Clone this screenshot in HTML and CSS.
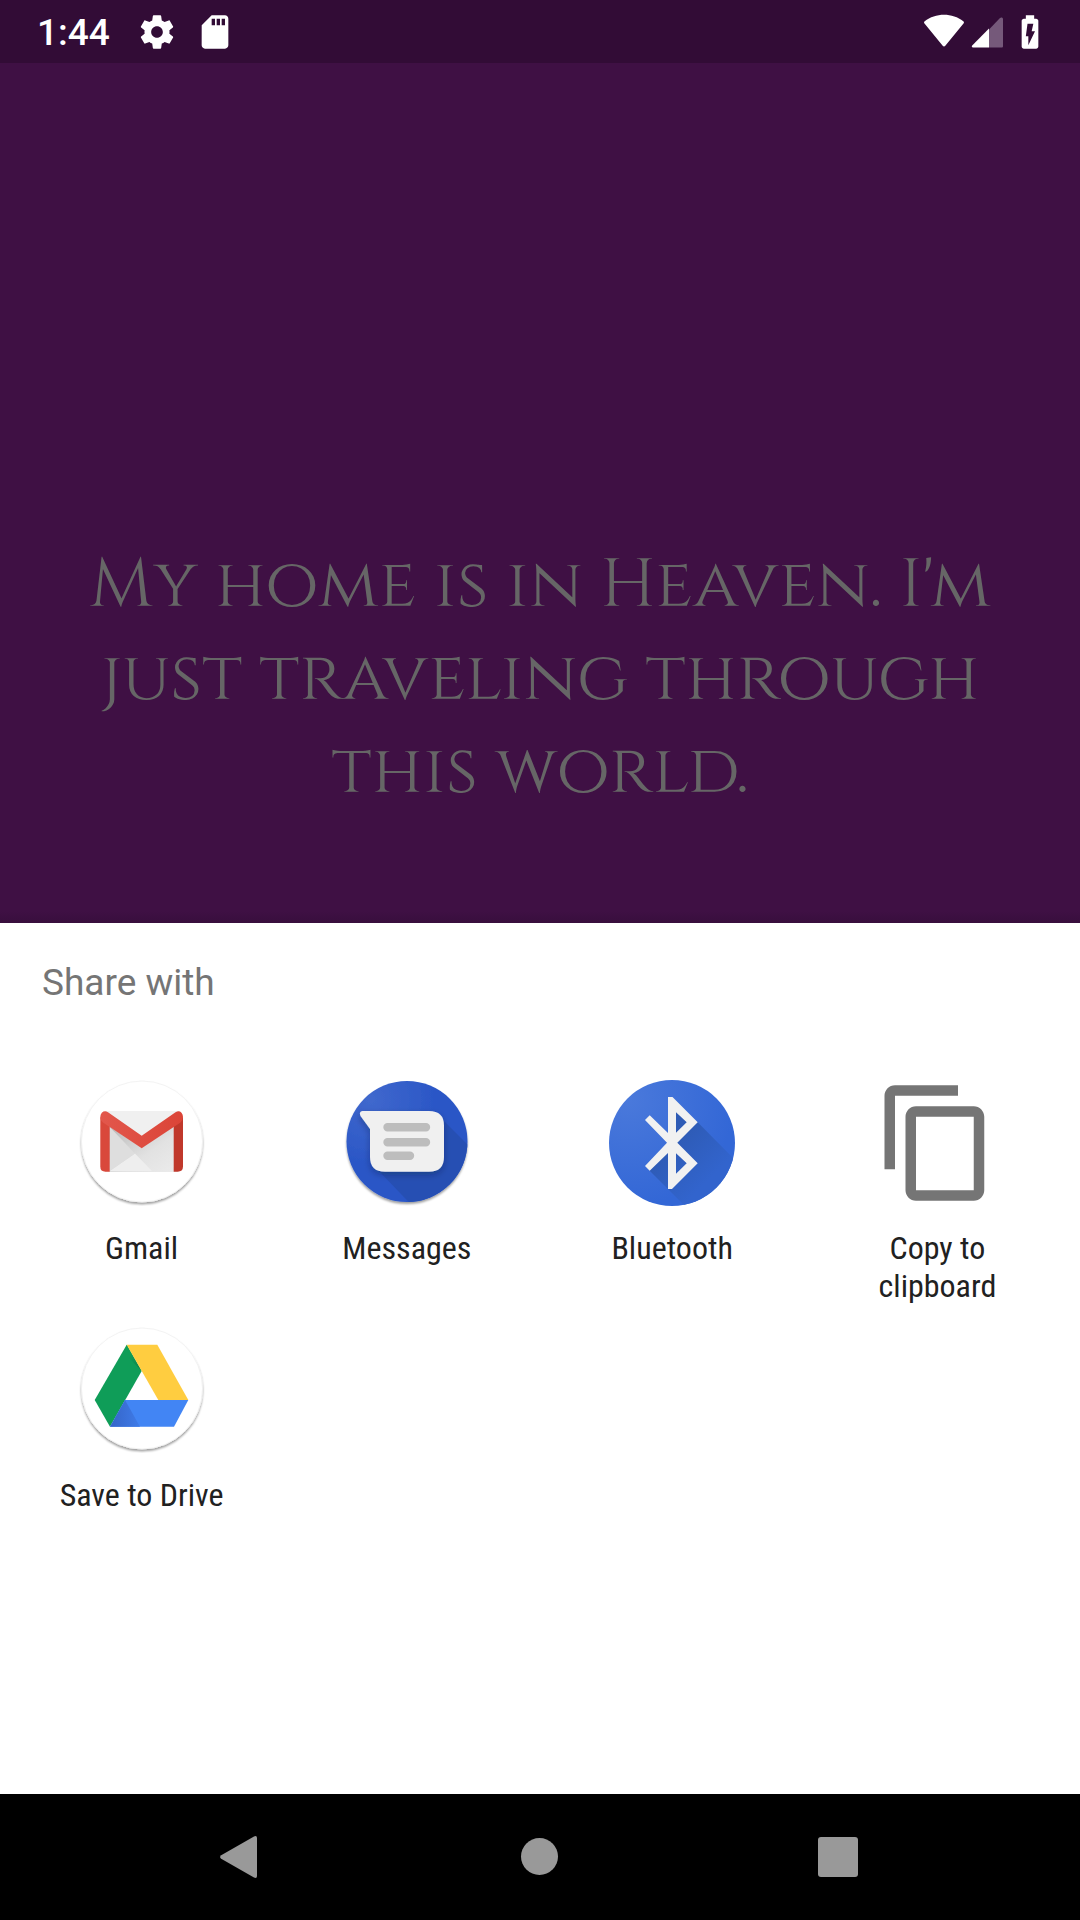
FILE: index.html
```html
<!DOCTYPE html>
<html lang="en">
<head>
<meta charset="utf-8">
<meta name="viewport" content="width=device-width, initial-scale=1">
<title>Share with</title>
<link rel="stylesheet" href="styles.css">
</head>
<body>
<div class="screen">
  <header class="status-bar">
    <time class="clock">1:44</time>
    <div class="status-notifications">
      <svg class="status-icon" viewBox="0 0 24 24" aria-hidden="true"><path d="M19.43 12.98c.04-.32.07-.64.07-.98s-.03-.66-.07-.98l2.11-1.65c.19-.15.24-.42.12-.64l-2-3.46c-.12-.22-.39-.3-.61-.22l-2.49 1c-.52-.4-1.08-.73-1.69-.98l-.38-2.65C14.46 2.18 14.25 2 14 2h-4c-.25 0-.46.18-.49.42l-.38 2.65c-.61.25-1.17.59-1.69.98l-2.49-1c-.23-.09-.49 0-.61.22l-2 3.46c-.13.22-.07.49.12.64l2.11 1.65c-.04.32-.07.65-.07.98s.03.66.07.98l-2.11 1.65c-.19.15-.24.42-.12.64l2 3.46c.12.22.39.3.61.22l2.49-1c.52.4 1.08.73 1.69.98l.38 2.65c.03.24.24.42.49.42h4c.25 0 .46-.18.49-.42l.38-2.65c.61-.25 1.17-.59 1.69-.98l2.49 1c.23.09.49 0 .61-.22l2-3.46c.12-.22.07-.49-.12-.64l-2.11-1.65zM12 15.500c-1.930 0-3.500-1.570-3.500-3.500s1.570-3.500 3.500-3.500 3.500 1.570 3.500 3.500-1.570 3.500-3.500 3.500z"/></svg>
      <svg class="status-icon" viewBox="0 0 24 24" aria-hidden="true"><path d="M18 2h-8L4.020 8 4 20c0 1.100.9 2 2 2h12c1.100 0 2-.9 2-2V4c0-1.100-.9-2-2-2zm-6 6h-2V4h2v4zm3 0h-2V4h2v4zm3 0h-2V4h2v4z"/></svg>
    </div>
    <div class="status-system">
      <svg class="wifi-icon" viewBox="0 0 42 40" aria-hidden="true"><path d="M1.500 11.500C0.800 10.800 0.900 9.800 1.700 9.200C7 5 14 2.800 21 2.800S35 5 40.300 9.200C41.100 9.800 41.200 10.800 40.500 11.500L22.300 33.800C21.600 34.700 20.400 34.700 19.700 33.800Z"/></svg>
      <svg class="signal-icon" viewBox="0 0 33 40" aria-hidden="true"><path class="signal-empty" d="M18 17.500L29 6C30 5 32 5.300 32 7V34C32 35 31.500 35.500 30.500 35.500H18Z"/><path d="M18 16.500V35.500H2C0.800 35.500 0.400 34.400 1.200 33.500Z"/></svg>
      <svg class="status-icon" viewBox="0 0 24 24" aria-hidden="true"><path d="M15.670 4H14.500V2h-5v2H8.330C7.600 4 7 4.600 7 5.330v15.330C7 21.400 7.600 22 8.330 22h7.330c.74 0 1.340-.6 1.340-1.330V5.330C17 4.600 16.400 4 15.670 4zM11 20v-5.500H9.500L10.500 7H14l-1 4.500h2L11 20z"/></svg>
    </div>
  </header>

  <main class="quote-area">
    <p class="quote">My home is in Heaven. I'm just traveling through this world.</p>
  </main>

  <section class="share-sheet" aria-labelledby="share-title">
    <h1 class="share-title" id="share-title">Share with</h1>
    <div class="targets">
      <button class="target" type="button">
        <svg class="target-icon" viewBox="0 0 126 126" aria-hidden="true">
          <defs>
            <filter id="disc-shadow" x="-10%" y="-10%" width="120%" height="120%"><feDropShadow dx="0" dy="2" stdDeviation="1.200" flood-color="#000" flood-opacity=".38"/></filter>
            <linearGradient id="flap" x1="0" x2="1"><stop offset="0" stop-color="#e2574c"/><stop offset="1" stop-color="#db4437"/></linearGradient>
            <linearGradient id="paper-shade" x1="0" y1="0" x2="1" y2="1"><stop offset="0" stop-color="#b8b8b8"/><stop offset=".6" stop-color="#e2e2e2"/><stop offset="1" stop-color="#ebebeb"/></linearGradient>
          </defs>
          <circle cx="63" cy="61.500" r="60.500" fill="#fff" stroke="#f0f0f0" stroke-width=".8" filter="url(#disc-shadow)"/>
          <path d="M26 31H100V92H26Z" fill="#f0f0f0"/>
          <path d="M30 46L62.700 68L95 46V92H30Z" fill="url(#paper-shade)"/>
          <path d="M30.700 91L56 73.500L73 91Z" fill="#eee"/>
          <path d="M30.700 47V91L56 73.500Z" fill="#dedede"/>
          <path d="M21.300 37V86.500Q21.300 91.700 26.500 91.700H30.700V45Z" fill="#d9483b"/>
          <path d="M104 37V86.500Q104 91.700 98.500 91.700H94.700V45Z" fill="#c0382b"/>
          <path d="M62.700 55.700L29 32.200Q25.500 30 22.800 32.700Q21.300 34.500 21.300 37Q21.300 40.600 24 42.500L62.700 68.300L101.500 42.500Q104 40.600 104 37Q104 34.500 102.500 32.700Q100 30 96.500 32.200Z" fill="url(#flap)"/>
        </svg>
        <span class="target-label">Gmail</span>
      </button>
      <button class="target" type="button">
        <svg class="target-icon" viewBox="0 0 126 126" aria-hidden="true">
          <defs>
            <radialGradient id="messages-disc" cx=".2" cy=".15" r=".8"><stop offset="0" stop-color="#4068cd"/><stop offset=".7" stop-color="#2a56c6"/></radialGradient>
            <clipPath id="messages-clip"><circle cx="63" cy="61.500" r="60.500"/></clipPath>
            <filter id="bubble-shadow" x="-20%" y="-20%" width="140%" height="150%"><feDropShadow dx="0" dy="3" stdDeviation="3" flood-color="#123" flood-opacity=".3"/></filter>
          </defs>
          <circle cx="63" cy="61.500" r="60.500" fill="url(#messages-disc)" filter="url(#disc-shadow)"/>
          <g clip-path="url(#messages-clip)">
            <path d="M97 38L140 81V140H82L32 88Z" fill="#264fb3"/>
            <path d="M18.500 31H85Q100 31 100 45.500V77Q100 91.700 85 91.700H41Q26 91.700 26 77V49L16.500 36Q14.500 31.800 18.500 31Z" fill="#f0f0f0" filter="url(#bubble-shadow)"/>
          </g>
          <path d="M43.500 47.200H82M43.500 62.200H82M43.500 75.700H66" fill="none" stroke="#bdbdbd" stroke-width="8.400" stroke-linecap="round"/>
        </svg>
        <span class="target-label">Messages</span>
      </button>
      <button class="target" type="button">
        <svg class="target-icon" viewBox="0 0 126 126" aria-hidden="true">
          <defs>
            <radialGradient id="bluetooth-disc" cx=".15" cy=".15" r=".85"><stop offset="0" stop-color="#4a79db"/><stop offset="1" stop-color="#3367d6"/></radialGradient>
            <linearGradient id="long-shadow" gradientUnits="userSpaceOnUse" x1="62" y1="62" x2="100" y2="100"><stop offset="0" stop-color="#2e5bb5"/><stop offset="1" stop-color="#3264cd"/></linearGradient>
            <clipPath id="bluetooth-clip"><circle cx="63" cy="63" r="63"/></clipPath>
          </defs>
          <circle cx="63" cy="63" r="63" fill="url(#bluetooth-disc)"/>
          <g clip-path="url(#bluetooth-clip)">
            <path d="M67 30L88.700 42.300L140 94V140H90L40.700 90.700L59 70Z" fill="url(#long-shadow)"/>
          </g>
          <path fill-rule="evenodd" d="M59 17H63.500L88.700 42.300L68.300 62.700L88.700 83.300L63 109H59V73L40.700 90.700L36 86L58 62.700L36 40L40.700 35.300L59 53ZM67 32.300V52.700L77.700 42.300ZM67 73.300V93.700L77.700 83.300Z" fill="#f1f1f1"/>
        </svg>
        <span class="target-label">Bluetooth</span>
      </button>
      <button class="target" type="button">
        <svg class="target-icon" viewBox="0 0 24 24" aria-hidden="true"><path fill="#757575" d="M16 1H4c-1.100 0-2 .9-2 2v14h2V3h12V1zm3 4H8c-1.100 0-2 .9-2 2v14c0 1.100.9 2 2 2h11c1.100 0 2-.9 2-2V7c0-1.100-.9-2-2-2zm0 16H8V7h11v14z"/></svg>
        <span class="target-label">Copy to clipboard</span>
      </button>
      <button class="target" type="button">
        <svg class="target-icon" viewBox="0 0 126 126" aria-hidden="true">
          <defs>
            <linearGradient id="drive-fold" x1="0" x2="1"><stop offset="0" stop-color="#3565c8"/><stop offset="1" stop-color="#3f7be8"/></linearGradient>
            <linearGradient id="drive-crease" x1="0" y1="0" x2="1" y2="1"><stop offset=".3" stop-color="#0f9d58"/><stop offset="1" stop-color="#0c8048"/></linearGradient>
          </defs>
          <circle cx="63" cy="61.500" r="60.500" fill="#fff" stroke="#f0f0f0" stroke-width=".8" filter="url(#disc-shadow)"/>
          <path d="M47.700 17.700L62.700 44L31 99.700L15.700 73Z" fill="#0f9d58"/>
          <path d="M47.700 17.700L62.700 44L48 29Z" fill="url(#drive-crease)"/>
          <path d="M47.700 17.700H78.300L109.300 73H79.300Z" fill="#ffcd40"/>
          <path d="M46 73H109.300L95 99.700H31Z" fill="#4285f4"/>
          <path d="M46 73L61 99.700H31Z" fill="url(#drive-fold)"/>
        </svg>
        <span class="target-label">Save to Drive</span>
      </button>
    </div>
  </section>

  <nav class="nav-bar" aria-label="System navigation">
    <button class="nav-button" type="button" aria-label="Back"><svg class="nav-icon" viewBox="0 0 44 44" aria-hidden="true"><path d="M3.200 20.200L36 1.400Q39 0.300 39 3V41Q39 43.700 36 42.600L3.200 23.800Q1 22 3.200 20.200Z"/></svg></button>
    <button class="nav-button" type="button" aria-label="Home"><svg class="nav-icon" viewBox="0 0 44 44" aria-hidden="true"><circle cx="21.500" cy="21.500" r="18.500"/></svg></button>
    <button class="nav-button" type="button" aria-label="Recent apps"><svg class="nav-icon" viewBox="0 0 44 44" aria-hidden="true"><rect x="0" y="2" width="40" height="40" rx="3"/></svg></button>
  </nav>
</div>
</body>
</html>
```

FILE: styles.css
```css
* {
  box-sizing: border-box;
}

body {
  margin: 0;
  background: #3f1044;
  font-family: Roboto, "Liberation Sans", sans-serif;
}

button {
  margin: 0;
  border: 0;
  background: none;
  color: inherit;
  font: inherit;
  cursor: pointer;
}

svg {
  display: block;
  flex: none;
}

.screen {
  display: flex;
  flex-direction: column;
  min-height: 100vh;
}

.status-bar {
  display: flex;
  align-items: center;
  height: 63px;
  padding: 0 30px 0 37px;
  background: #320c36;
  color: #fff;
  fill: #fff;
}

.clock {
  padding-top: 2px;
  font-size: 37px;
  font-weight: 500;
  line-height: 44px;
}

.status-notifications {
  display: flex;
  gap: 18px;
  margin-left: 27px;
}

.status-system {
  display: flex;
  gap: 6px;
  margin-left: auto;
}

.status-icon {
  width: 40px;
  height: 40px;
}

.wifi-icon {
  width: 42px;
  height: 40px;
}

.signal-icon {
  width: 33px;
  height: 40px;
}

.signal-empty {
  fill: #75597a;
}

.quote-area {
  display: flex;
  flex: 1;
  flex-direction: column;
  justify-content: flex-end;
  padding: 0 80px 105px;
  background: linear-gradient(to top, #380e3d, #3f1044 12px);
}

.quote {
  margin: 0;
  color: #666;
  font-family: Cinzel, "Liberation Serif", serif;
  font-size: 69px;
  line-height: 93px;
  text-align: center;
}

.share-sheet {
  min-height: 871px;
  background: #fff;
}

.share-title {
  margin: 0;
  padding: 38px 42px 0;
  color: #757575;
  font-size: 37px;
  font-weight: 400;
  line-height: 44px;
}

.targets {
  display: grid;
  grid-template-columns: repeat(4, 1fr);
  padding: 75px 10px 0 9px;
}

.target {
  display: flex;
  flex-direction: column;
  align-items: center;
  gap: 23px;
  min-height: 247px;
  padding: 0 48px;
  color: #212121;
}

.target-icon {
  width: 126px;
  height: 126px;
}

.target-label {
  font-family: "Roboto Condensed", "Liberation Sans Narrow", Roboto, sans-serif;
  font-size: 32px;
  line-height: 38px;
  text-align: center;
}

.nav-bar {
  display: grid;
  grid-template-columns: repeat(3, 1fr);
  height: 126px;
  padding: 0 90px;
  background: #000;
}

.nav-button {
  display: flex;
  align-items: center;
  justify-content: center;
  padding: 0;
}

.nav-icon {
  width: 44px;
  height: 44px;
  fill: #999;
}
```
